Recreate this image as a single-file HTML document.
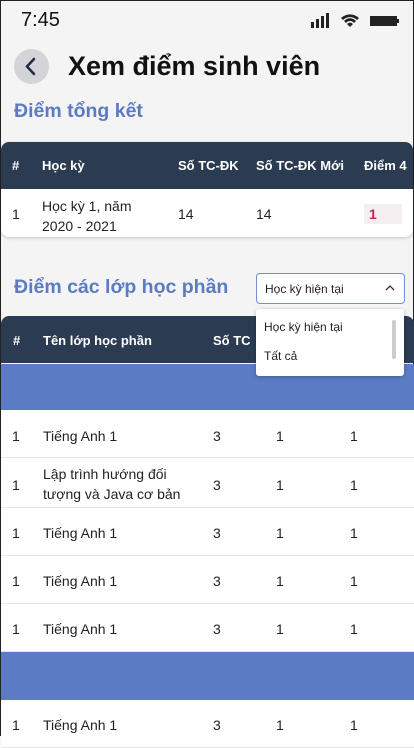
<!DOCTYPE html><html><head><meta charset="utf-8"><style>
*{margin:0;padding:0;box-sizing:border-box}
body{width:414px;height:736px;overflow:hidden;background:#f4f4f4;font-family:"Liberation Sans",sans-serif;position:relative;border:1px solid #222}
.a{position:absolute;white-space:nowrap}
.hd{background:#2b3c52;color:#fff;font-weight:bold;font-size:13px}
.w{color:#222;font-size:14px}
.row{position:absolute;left:0;width:414px;background:#fff;border-bottom:1px solid #e6e6e6}
</style></head><body>
<div class="a" style="left:20px;top:8px;font-size:20px;color:#111">7:45</div>
<svg class="a" style="left:310px;top:12px" width="90" height="16"><rect x="0" y="9" width="3" height="6" fill="#222"/><rect x="5" y="6" width="3" height="9" fill="#222"/><rect x="10" y="3" width="3" height="12" fill="#222"/><rect x="15" y="0" width="3" height="15" fill="#222"/><path d="M30 5a13 13 0 0 1 18 0l-2 2a10 10 0 0 0-14 0z M33 8a8 8 0 0 1 12 0l-2 2a5 5 0 0 0-8 0z M36 11a4 4 0 0 1 6 0l-3 3z" fill="#222"/><rect x="59" y="3" width="27" height="10" fill="#222"/><rect x="86" y="6" width="2" height="4" fill="#222"/></svg>
<div class="a" style="left:13px;top:48px;width:35px;height:35px;border-radius:50%;background:#d3d3d8"></div>
<svg class="a" style="left:13px;top:48px" width="35" height="35"><path d="M20 10l-7 7.5 7 7.5" stroke="#1d2b45" stroke-width="2.5" fill="none" stroke-linecap="round"/></svg>
<div class="a" style="left:67px;top:50px;font-size:27px;font-weight:bold;color:#111">Xem điểm sinh viên</div>
<div class="a" style="left:13px;top:99px;font-size:19.5px;font-weight:bold;color:#5b7bc4">Điểm tổng kết</div>
<div class="a" style="left:0px;top:141px;width:412px;height:95px;border-radius:8px;overflow:hidden;box-shadow:0 1px 3px rgba(0,0,0,.2);background:#fff">
<div class="hd" style="height:47px;position:relative">
<span class="a" style="left:11px;top:16px">#</span><span class="a" style="left:41px;top:16px">Học kỳ</span><span class="a" style="left:177px;top:16px">Số TC-ĐK</span><span class="a" style="left:255px;top:16px">Số TC-ĐK Mới</span><span class="a" style="left:363px;top:16px">Điểm 4</span></div>
<span class="a w" style="left:11px;top:64px">1</span><span class="a w" style="left:41px;top:54px;line-height:20px">Học kỳ 1, năm<br>2020 - 2021</span><span class="a w" style="left:177px;top:64px">14</span><span class="a w" style="left:255px;top:64px">14</span>
<span class="a" style="left:363px;top:62px;width:38px;height:20px;background:#f5eef0;color:#c8264f;font-weight:bold;font-size:14px;padding:2px 5px">1</span>
</div>
<div class="a" style="left:13px;top:275px;font-size:19.5px;font-weight:bold;color:#5b7bc4">Điểm các lớp học phần</div>
<div class="a hd" style="left:0px;top:315px;width:413px;height:47px;border-radius:8px 8px 0 0">
<span class="a" style="left:12px;top:17px">#</span><span class="a" style="left:42px;top:17px">Tên lớp học phần</span><span class="a" style="left:212px;top:17px">Số TC</span></div>
<div class="a" style="left:0;top:363px;width:414px;height:46px;background:#5b7bc4"></div>
<div class="row" style="top:409px;height:48px"><span class="a w" style="left:11px;top:18px">1</span><span class="a w" style="left:42px;top:18px">Tiếng Anh 1</span><span class="a w" style="left:212px;top:18px">3</span><span class="a w" style="left:275px;top:18px">1</span><span class="a w" style="left:349px;top:18px">1</span></div>
<div class="row" style="top:457px;height:50px"><span class="a w" style="left:11px;top:19px">1</span><span class="a w" style="left:42px;top:6px;line-height:20px">Lập trình hướng đối<br>tượng và Java cơ bản</span><span class="a w" style="left:212px;top:19px">3</span><span class="a w" style="left:275px;top:19px">1</span><span class="a w" style="left:349px;top:19px">1</span></div>
<div class="row" style="top:507px;height:48px"><span class="a w" style="left:11px;top:17px">1</span><span class="a w" style="left:42px;top:17px">Tiếng Anh 1</span><span class="a w" style="left:212px;top:17px">3</span><span class="a w" style="left:275px;top:17px">1</span><span class="a w" style="left:349px;top:17px">1</span></div>
<div class="row" style="top:555px;height:48px"><span class="a w" style="left:11px;top:17px">1</span><span class="a w" style="left:42px;top:17px">Tiếng Anh 1</span><span class="a w" style="left:212px;top:17px">3</span><span class="a w" style="left:275px;top:17px">1</span><span class="a w" style="left:349px;top:17px">1</span></div>
<div class="row" style="top:603px;height:48px"><span class="a w" style="left:11px;top:17px">1</span><span class="a w" style="left:42px;top:17px">Tiếng Anh 1</span><span class="a w" style="left:212px;top:17px">3</span><span class="a w" style="left:275px;top:17px">1</span><span class="a w" style="left:349px;top:17px">1</span></div>
<div class="a" style="left:0;top:651px;width:414px;height:48px;background:#5b7bc4"></div>
<div class="row" style="top:699px;height:48px"><span class="a w" style="left:11px;top:17px">1</span><span class="a w" style="left:42px;top:17px">Tiếng Anh 1</span><span class="a w" style="left:212px;top:17px">3</span><span class="a w" style="left:275px;top:17px">1</span><span class="a w" style="left:349px;top:17px">1</span></div>
<div class="a" style="left:255px;top:272px;width:149px;height:31px;border:1.5px solid #6f8fd8;border-radius:4px;background:#fff;font-size:12px;color:#222;padding:8px 8px">Học kỳ hiện tại</div>
<svg class="a" style="left:384px;top:283px" width="10" height="8"><path d="M1 6l4-4 4 4" stroke="#333" stroke-width="1.3" fill="none"/></svg>
<div class="a" style="left:255px;top:308px;width:148px;height:67px;background:#fff;border-radius:3px;box-shadow:0 1px 4px rgba(0,0,0,.25);font-size:12px;color:#222">
<span class="a" style="left:8px;top:11px">Học kỳ hiện tại</span><span class="a" style="left:8px;top:40px">Tất cả</span>
<div class="a" style="left:136px;top:11px;width:4px;height:39px;border-radius:2px;background:#ccc"></div></div>
</body></html>
